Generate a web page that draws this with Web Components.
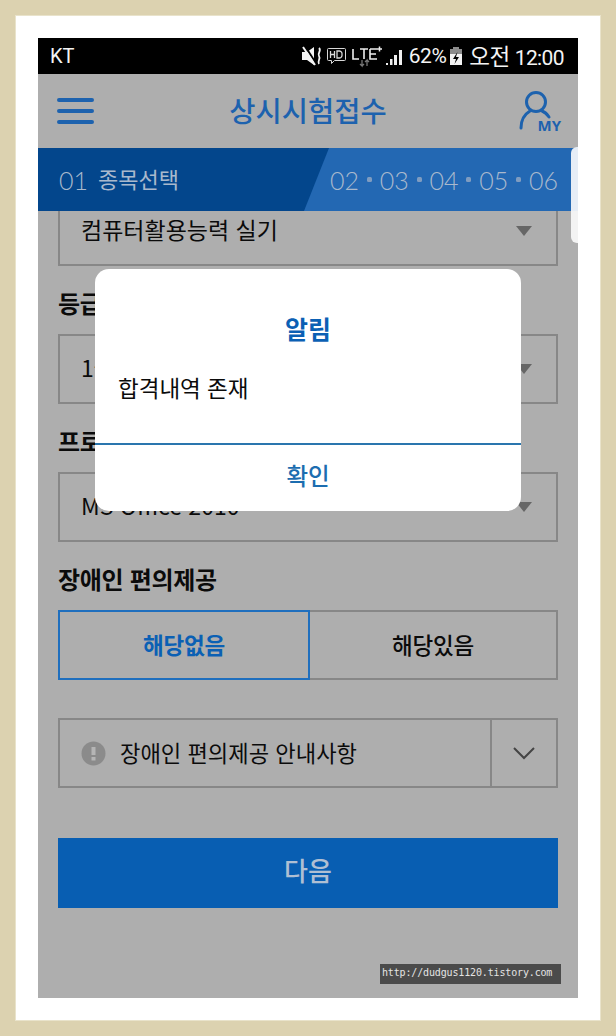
<!DOCTYPE html>
<html lang="ko">
<head>
<meta charset="utf-8">
<title>상시시험접수</title>
<style>
html, body { margin: 0; padding: 0; background: #fff; }
body { font-family: "Noto Sans CJK KR", "Noto Sans", sans-serif; color: #0b0b0b; }
</style>
</head>
<body>
<photo-frame>
  <phone-screen>
    <status-bar></status-bar>
    <app-header>상시시험접수</app-header>
    <step-bar></step-bar>
    <form-body>
      <form-select cropped>컴퓨터활용능력 실기</form-select>
      <form-label>등급</form-label>
      <form-select>1급</form-select>
      <form-label>프로그램</form-label>
      <form-select>MS Office 2010</form-select>
      <form-label>장애인 편의제공</form-label>
      <toggle-group></toggle-group>
      <info-row>장애인 편의제공 안내사항</info-row>
      <next-button>다음</next-button>
    </form-body>
    <side-tab></side-tab>
    <alert-dialog heading="알림" action="확인">합격내역 존재</alert-dialog>
    <water-mark>http://dudgus1120.tistory.com</water-mark>
  </phone-screen>
</photo-frame>

<script>
const CJK = '"Noto Sans CJK KR", "Noto Sans", sans-serif';

class PhotoFrame extends HTMLElement {
    constructor() {
        super();
        this.attachShadow({mode: 'open'});
        this.shadowRoot.innerHTML = `
            <style>
        :host {
            display: block;
            box-sizing: border-box;
            width: 616px;
            height: 1036px;
            padding: 23px;
            background: #fff;
            border: 15px solid #dcd2b0;
            box-shadow: inset 0 0 0 1px #e9e3cb;
        }
            </style>
            <slot></slot>
        `;
    }
}

class PhoneScreen extends HTMLElement {
    constructor() {
        super();
        this.attachShadow({mode: 'open'});
        this.shadowRoot.innerHTML = `
            <style>
        :host {
            display: flex;
            flex-direction: column;
            position: relative;
            width: 540px;
            height: 960px;
            background: #aeaeae;
        }
            </style>
            <slot></slot>
        `;
    }
}

class StatusBar extends HTMLElement {
    constructor() {
        super();
        this.attachShadow({mode: 'open'});
        this.shadowRoot.innerHTML = `
            <style>
        :host {
            display: flex;
            align-items: center;
            height: 36px;
            padding: 0 14px 0 12px;
            background: #000;
            color: #f4f4f4;
            font: 21px/1 Roboto, sans-serif;
            flex: none;
        }
        .carrier { flex: 1; font-size: 20px; }
        svg { display: block; flex: none; }
        .pct { margin-left: 5px; letter-spacing: -0.5px; }
        .clock { margin-left: 6px; white-space: nowrap; letter-spacing: -0.6px; }
        .clock b { font: 400 22.500px/1 ${CJK}; letter-spacing: -0.5px; margin-right: 5px; }
            </style>
            <span class="carrier">KT</span>
            <svg width="21" height="20" viewBox="0 0 21 20">
                <path d="M0 6h5l7-5v18l-7-5H0z" fill="#f4f4f4"/>
                <path d="M3 0l12 19" stroke="#000" stroke-width="2"/>
                <path d="M1 1l12 18" stroke="#f4f4f4" stroke-width="2"/>
                <path d="M17 2c3 3-2 5 0 8s-2 5 0 8" fill="none" stroke="#f4f4f4" stroke-width="1.800"/>
            </svg>
            <svg width="21" height="18" viewBox="0 0 21 18" style="margin-left:3px">
                <path d="M2.500 1.500h16a1 1 0 0 1 1 1v10a1 1 0 0 1-1 1h-10l-3 3v-3h-3a1 1 0 0 1-1-1v-10a1 1 0 0 1 1-1z" fill="none" stroke="#d8d8d8"/>
                <path d="M4.500 4v7M8.500 4v7M4.500 7.500h4M11 4v7h2.500a3 3 0 0 0 2.500-3.500a3 3 0 0 0-2.500-3.500z" fill="none" stroke="#d8d8d8" stroke-width="1.300"/>
            </svg>
            <svg width="30" height="26" viewBox="0 0 30 26" style="margin-left:5px">
                <path d="M1 6v10h6M8 6h8M12 6v10M18 6h7M18 6v10h7M18 11h6" fill="none" stroke="#eee" stroke-width="1.600"/>
                <path d="M25 6h5M27.500 3.500v5" stroke="#eee" stroke-width="1.500"/>
                <path d="M10 17v6l-2-2M10 23l2-2M15 23v-6l-2 2M15 17l2 2" fill="none" stroke="#777" stroke-width="1.300"/>
            </svg>
            <svg width="20" height="20" viewBox="0 0 20 20" style="margin-left:2px">
                <path d="M2 19h2v-2H2zM6 19h2.500v-6H6zM10 19h3V9h-3zM15 19h3V4h-3z" fill="#f0f0f0"/>
            </svg>
            <span class="pct">62%</span>
            <svg width="14" height="20" viewBox="0 0 14 20" style="margin-left:3px">
                <path d="M4 1h6v2h3v16H1V3h3z" fill="#8c8c8c"/>
                <path d="M1 8h12v11H1z" fill="#f4f4f4"/>
                <path d="M8.500 6L4 13h3l-1.500 5L10 11H7z" fill="#000"/>
            </svg>
            <span class="clock"><b>오전</b>12:00</span>
        `;
    }
}

class AppHeader extends HTMLElement {
    constructor() {
        super();
        this.attachShadow({mode: 'open'});
        this.shadowRoot.innerHTML = `
            <style>
        :host {
            display: grid;
            grid-template-columns: 1fr auto 1fr;
            align-items: center;
            height: 74px;
            padding: 0 19px;
            box-sizing: border-box;
            flex: none;
            color: #1d62ae;
        }
        .title { font: 500 28.500px/1 ${CJK}; padding-bottom: 2px; }
        .my { justify-self: end; position: relative; width: 42px; height: 44px; margin: 2px -2px 0 0; }
        .my span {
            position: absolute;
            right: 0;
            bottom: 1px;
            font: 700 15px/1 "Open Sans", sans-serif;
        }
        svg { display: block; }
            </style>
            <svg width="37" height="28" viewBox="0 0 37 28">
                <path d="M2 3h33M2 14h33M2 25h33" stroke="currentColor" stroke-width="4" stroke-linecap="round"/>
            </svg>
            <span class="title"><slot></slot></span>
            <div class="my">
                <svg width="42" height="44" viewBox="0 0 42 44">
                    <circle cx="17" cy="12" r="9.500" fill="none" stroke="currentColor" stroke-width="3"/>
                    <path d="M2 38c0-9 4-14 9-17M23 21c3 1 5 3 7 6" fill="none" stroke="currentColor" stroke-width="3" stroke-linecap="round"/>
                </svg>
                <span>MY</span>
            </div>
        `;
    }
}

class StepBar extends HTMLElement {
    constructor() {
        super();
        this.attachShadow({mode: 'open'});
        this.shadowRoot.innerHTML = `
            <style>
        :host {
            display: flex;
            height: 63px;
            flex: none;
            background: #2368b3;
            color: #a9b9cd;
            font: 300 25px Lato, sans-serif;
        }
        .current {
            display: flex;
            align-items: center;
            gap: 10px;
            box-sizing: border-box;
            width: 291px;
            padding-left: 21px;
            background: #03468c;
            clip-path: polygon(0 0, 100% 0, calc(100% - 25px) 100%, 0 100%);
        }
        .current b { font: 400 22px ${CJK}; padding-bottom: 3px; }
        .rest {
            flex: 1;
            display: flex;
            align-items: center;
            justify-content: space-between;
            padding: 0 20px 0 1px;
        }
        .rest i { width: 5px; height: 5px; border-radius: 1.500px; background: #7f9cc0; }
            </style>
            <div class="current"><span>01</span><b>종목선택</b></div>
            <div class="rest">
                <span>02</span><i></i><span>03</span><i></i><span>04</span><i></i><span>05</span><i></i><span>06</span>
            </div>
        `;
    }
}

class FormBody extends HTMLElement {
    constructor() {
        super();
        this.attachShadow({mode: 'open'});
        this.shadowRoot.innerHTML = `
            <style>
        :host {
            display: flex;
            flex-direction: column;
            padding: 0 20px;
        }
            </style>
            <slot></slot>
        `;
    }
}

class FormLabel extends HTMLElement {
    constructor() {
        super();
        this.attachShadow({mode: 'open'});
        this.shadowRoot.innerHTML = `
            <style>
        :host {
            display: block;
            height: 68px;
            padding-top: 23px;
            box-sizing: border-box;
            font: 700 24px/28px ${CJK};
            letter-spacing: -0.3px;
            color: #0b0b0b;
            white-space: nowrap;
        }
            </style>
            <slot></slot>
        `;
    }
}

class FormSelect extends HTMLElement {
    constructor() {
        super();
        this.attachShadow({mode: 'open'});
        this.shadowRoot.innerHTML = `
            <style>
        :host {
            display: flex;
            align-items: center;
            justify-content: space-between;
            box-sizing: border-box;
            height: 70px;
            padding: 0 24px 0 21px;
            border: 2px solid #878787;
            font: 400 23px ${CJK};
            color: #0b0b0b;
            white-space: nowrap;
        }
        :host([cropped]) {
            height: 55px;
            border-top: 0;
            padding-bottom: 14px;
        }
        .value { padding-bottom: 4px; }
        .arrow {
            width: 0;
            height: 0;
            border-left: 8px solid transparent;
            border-right: 8px solid transparent;
            border-top: 10px solid #666;
        }
            </style>
            <span class="value"><slot></slot></span>
            <span class="arrow"></span>
        `;
    }
}

class ToggleGroup extends HTMLElement {
    constructor() {
        super();
        this.attachShadow({mode: 'open'});
        this.shadowRoot.innerHTML = `
            <style>
        :host {
            display: grid;
            grid-template-columns: 252px 1fr;
            height: 70px;
            box-sizing: border-box;
            font: 500 22.500px ${CJK};
            letter-spacing: -0.2px;
        }
        div {
            display: flex;
            align-items: center;
            justify-content: center;
            box-sizing: border-box;
            padding-bottom: 2px;
            border: 2px solid #878787;
        }
        .on { border-color: #1f6fbe; color: #0b60b4; font-weight: 700; }
        .off { border-left: 0; color: #0b0b0b; }
            </style>
            <div class="on">해당없음</div>
            <div class="off">해당있음</div>
        `;
    }
}

class InfoRow extends HTMLElement {
    constructor() {
        super();
        this.attachShadow({mode: 'open'});
        this.shadowRoot.innerHTML = `
            <style>
        :host {
            display: flex;
            align-items: center;
            box-sizing: border-box;
            height: 70px;
            margin-top: 38px;
            border: 2px solid #878787;
            font: 400 22.200px ${CJK};
            color: #0b0b0b;
            white-space: nowrap;
        }
        .text { flex: 1; display: flex; align-items: center; gap: 14px; padding-left: 21px; }
        .text span { padding-bottom: 3px; }
        .more {
            display: flex;
            align-items: center;
            justify-content: center;
            width: 64px;
            height: 100%;
            border-left: 2px solid #878787;
        }
        svg { display: block; }
            </style>
            <div class="text">
                <svg width="25" height="25" viewBox="0 0 25 25">
                    <circle cx="12.500" cy="12.500" r="12" fill="#8b8b8b"/>
                    <path d="M12.500 6v8" stroke="#b5b5b5" stroke-width="4"/>
                    <path d="M12.500 16v3.500" stroke="#b5b5b5" stroke-width="4"/>
                </svg>
                <span><slot></slot></span>
            </div>
            <div class="more">
                <svg width="22" height="14" viewBox="0 0 22 14">
                    <path d="M1 2l10 10L21 2" fill="none" stroke="#444" stroke-width="2"/>
                </svg>
            </div>
        `;
    }
}

class NextButton extends HTMLElement {
    constructor() {
        super();
        this.attachShadow({mode: 'open'});
        this.shadowRoot.innerHTML = `
            <style>
        :host {
            display: flex;
            align-items: center;
            justify-content: center;
            box-sizing: border-box;
            height: 70px;
            margin-top: 50px;
            padding-bottom: 7px;
            background: #085eb2;
            color: #afbfd3;
            font: 500 26px ${CJK};
        }
            </style>
            <slot></slot>
        `;
    }
}

class SideTab extends HTMLElement {
    constructor() {
        super();
        this.attachShadow({mode: 'open'});
        this.shadowRoot.innerHTML = `
            <style>
        :host {
            position: absolute;
            right: 0;
            top: 109px;
            width: 7px;
            height: 96px;
            border-radius: 6px 0 0 6px;
            background: linear-gradient(#e6edf6 0 64px, #f3f3f3 64px);
        }
            </style>
        `;
    }
}

class AlertDialog extends HTMLElement {
    constructor() {
        super();
        this.attachShadow({mode: 'open'});
        this.shadowRoot.innerHTML = `
            <style>
        :host {
            position: absolute;
            left: 57px;
            top: 231px;
            width: 426px;
            height: 242px;
            display: flex;
            flex-direction: column;
            background: #fff;
            border-radius: 14px;
            overflow: hidden;
        }
        .head {
            padding-top: 39px;
            text-align: center;
            color: #0b60b4;
            font: 700 25px/40px ${CJK};
        }
        .body {
            flex: 1;
            padding: 20px 23px 0;
            color: #0b0b0b;
            font: 400 22.500px/38px ${CJK};
        }
        .foot {
            display: flex;
            align-items: center;
            justify-content: center;
            box-sizing: border-box;
            height: 68px;
            padding-bottom: 6px;
            border-top: 2px solid #2a76ae;
            color: #1c6db0;
            font: 500 23.500px ${CJK};
        }
            </style>
            <div class="head">${this.getAttribute('heading')}</div>
            <div class="body"><slot></slot></div>
            <div class="foot">${this.getAttribute('action')}</div>
        `;
    }
}

class WaterMark extends HTMLElement {
    constructor() {
        super();
        this.attachShadow({mode: 'open'});
        this.shadowRoot.innerHTML = `
            <style>
        :host {
            position: absolute;
            left: 342px;
            top: 926px;
            width: 181px;
            height: 20px;
            box-sizing: border-box;
            padding-left: 2px;
            background: #4b4b4b;
            color: #e4e4e4;
            font: 10px/18px "DejaVu Sans Mono", monospace;
            letter-spacing: -0.15px;
            white-space: nowrap;
        }
            </style>
            <slot></slot>
        `;
    }
}

customElements.define('photo-frame', PhotoFrame);
customElements.define('phone-screen', PhoneScreen);
customElements.define('status-bar', StatusBar);
customElements.define('app-header', AppHeader);
customElements.define('step-bar', StepBar);
customElements.define('form-body', FormBody);
customElements.define('form-label', FormLabel);
customElements.define('form-select', FormSelect);
customElements.define('toggle-group', ToggleGroup);
customElements.define('info-row', InfoRow);
customElements.define('next-button', NextButton);
customElements.define('side-tab', SideTab);
customElements.define('alert-dialog', AlertDialog);
customElements.define('water-mark', WaterMark);
</script>
</body>
</html>
